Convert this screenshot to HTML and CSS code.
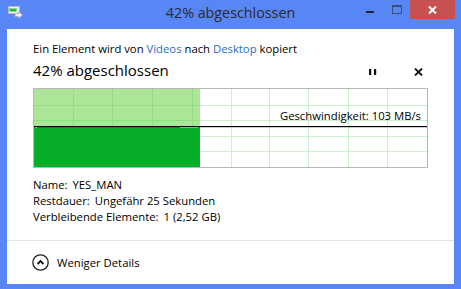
FILE: index.html
```html
<!DOCTYPE html>
<html lang="de">
<head>
<meta charset="utf-8">
<title>42% abgeschlossen</title>
<link rel="stylesheet" href="styles.css">
</head>
<body>
<div class="window">
  <div class="titlebar">
    <div class="tb-left">
      <svg class="app-icon" width="15" height="13" viewBox="0 0 15 13">
        <rect x="0.5" y="0.5" width="11" height="7" fill="#f2f2f2" stroke="#b8b8b8"/>
        <rect x="1.5" y="2" width="7" height="3.5" fill="#22b33a"/>
        <rect x="1.5" y="2" width="7" height="1.2" fill="#7fe08c"/>
        <path d="M7 7.5 H10.5 V5.5 L14.5 9 L10.5 12.5 V10.5 H7 Z" fill="#eeeeee" stroke="#a9a9a9" stroke-width="0.8"/>
      </svg>
    </div>
    <div class="tb-title">42% abgeschlossen</div>
    <div class="tb-right">
      <div class="wbtn min"><span class="min-bar"></span></div>
      <div class="wbtn max"><span class="max-box"></span></div>
      <div class="wbtn close">
        <svg width="9" height="8" viewBox="0 0 9 8"><path d="M1 0.5 L8 7.5 M8 0.5 L1 7.5" stroke="#fff" stroke-width="2"/></svg>
      </div>
    </div>
  </div>
  <div class="client">
    <div class="main">
      <div class="line1">Ein Element wird von <span class="link">Videos</span> nach <span class="link">Desktop</span> kopiert</div>
      <div class="headrow">
        <div class="headline">42% abgeschlossen</div>
        <div class="ctrls">
          <div class="ctrl">
            <svg width="8" height="6" viewBox="0 0 8 6"><rect x="0" y="0" width="2.2" height="6" fill="#111"/><rect x="5" y="0" width="2.2" height="6" fill="#111"/></svg>
          </div>
          <div class="ctrl">
            <svg width="9" height="8" viewBox="0 0 9 8"><path d="M1 0.5 L8 7.5 M8 0.5 L1 7.5" stroke="#111" stroke-width="1.8"/></svg>
          </div>
        </div>
      </div>
      <div class="graph">
        <svg class="chart" width="393" height="78" viewBox="0 0 393 78">
          <rect x="0" y="0" width="393" height="78" fill="#fff"/>
          <g stroke="#cdefcf" stroke-width="1">
            <path d="M39.5 0V78 M78.5 0V78 M118.5 0V78 M158.5 0V78 M197.5 0V78 M235.5 0V78 M274.5 0V78 M314.5 0V78 M353.5 0V78"/>
            <path d="M0 16.5H393 M0 31.5H393 M0 47.5H393 M0 62.5H393"/>
          </g>
          <rect x="0" y="0" width="166" height="37" fill="#abe597"/>
          <g stroke="#93dc85" stroke-width="1">
            <path d="M39.5 0V37 M78.5 0V37 M118.5 0V37 M158.5 0V37"/>
            <path d="M0 16.5H166 M0 31.5H166"/>
          </g>
          <rect x="0" y="38" width="166" height="40" fill="#06ae27"/>
          <rect x="1" y="38" width="2" height="1" fill="#b6e3ae"/>
          <rect x="146" y="38" width="18" height="1" fill="#b6e3ae"/>
          <rect x="0" y="37" width="393" height="1.2" fill="#000"/>
        </svg>
        <span class="speed">Geschwindigkeit: 103 MB/s</span>
      </div>
      <div class="details">
        <div class="row"><span class="lbl">Name:</span> YES_MAN</div>
        <div class="row"><span class="lbl">Restdauer:</span> Ungefähr 25 Sekunden</div>
        <div class="row"><span class="lbl">Verbleibende Elemente:</span> 1 (2,52 GB)</div>
      </div>
    </div>
    <div class="footer">
      <svg class="circle" width="17" height="17" viewBox="0 0 17 17">
        <circle cx="8.5" cy="8.5" r="7.7" fill="none" stroke="#222" stroke-width="1.3"/>
        <path d="M5.6 10 L8.5 7 L11.4 10" fill="none" stroke="#111" stroke-width="1.8"/>
      </svg>
      <span class="more">Weniger Details</span>
    </div>
  </div>
</div>
</body>
</html>
```
FILE: styles.css
```css
* { box-sizing: border-box; }
html, body { margin: 0; padding: 0; }
body {
  font-family: "Open Sans", "Noto Sans", sans-serif;
  color: #000;
}
.window {
  width: 461px;
  height: 289px;
  background: #5886f4;
  display: flex;
  flex-direction: column;
}
.titlebar {
  height: 29px;
  flex: none;
  display: grid;
  grid-template-columns: 1fr auto 1fr;
}
.tb-left { padding: 6px 0 0 8px; }
.app-icon { display: block; }
.tb-title {
  font-size: 14.3px;
  line-height: 20px;
  padding-top: 3px;
  color: #2b2b2b;
  white-space: nowrap;
}
.tb-right {
  display: flex;
  justify-content: flex-end;
  align-items: flex-start;
  padding-right: 6px;
}
.wbtn {
  height: 19px;
  display: flex;
  align-items: center;
  justify-content: center;
}
.wbtn.min { width: 26px; }
.wbtn.max { width: 27px; }
.wbtn.close { width: 45px; background: #c75050; }
.min-bar {
  display: block;
  width: 8px;
  height: 2px;
  background: #1f2533;
  margin-top: 5px;
}
.max-box {
  display: block;
  width: 10px;
  height: 9px;
  border: 1px solid #3a4c78;
  border-top-width: 2px;
}
.client {
  flex: 1;
  margin: 0 7px 5px;
  background: #fff;
  display: flex;
  flex-direction: column;
}
.main {
  flex: 1;
  padding: 12px 26px 0;
}
.line1 {
  font-size: 11.3px;
  line-height: 16px;
  white-space: nowrap;
}
.link { color: #1f6ec8; }
.headrow {
  margin-top: 3px;
  height: 20px;
  display: flex;
  align-items: center;
  justify-content: space-between;
}
.headline {
  font-size: 15px;
  line-height: 20px;
  white-space: nowrap;
}
.ctrls {
  display: flex;
  gap: 25px;
  padding-top: 3px;
}
.ctrl {
  width: 20px;
  height: 10px;
  display: flex;
  align-items: center;
  justify-content: center;
}
.ctrl svg { display: block; }
.graph {
  margin-top: 8px;
  height: 80px;
  border: 1px solid #b9b9b9;
  position: relative;
  overflow: hidden;
}
.chart { display: block; }
.speed {
  position: absolute;
  right: 6px;
  top: 19px;
  font-size: 11.3px;
  line-height: 16px;
  white-space: nowrap;
}
.details {
  margin-top: 9px;
  font-size: 11.3px;
  line-height: 16px;
}
.lbl { margin-right: 2px; }
.footer {
  flex: none;
  height: 44px;
  border-top: 1px solid #e2e2e2;
  display: flex;
  align-items: center;
  gap: 8px;
  padding-left: 25px;
}
.circle { display: block; }
.more {
  font-size: 11.3px;
  line-height: 16px;
}
```
